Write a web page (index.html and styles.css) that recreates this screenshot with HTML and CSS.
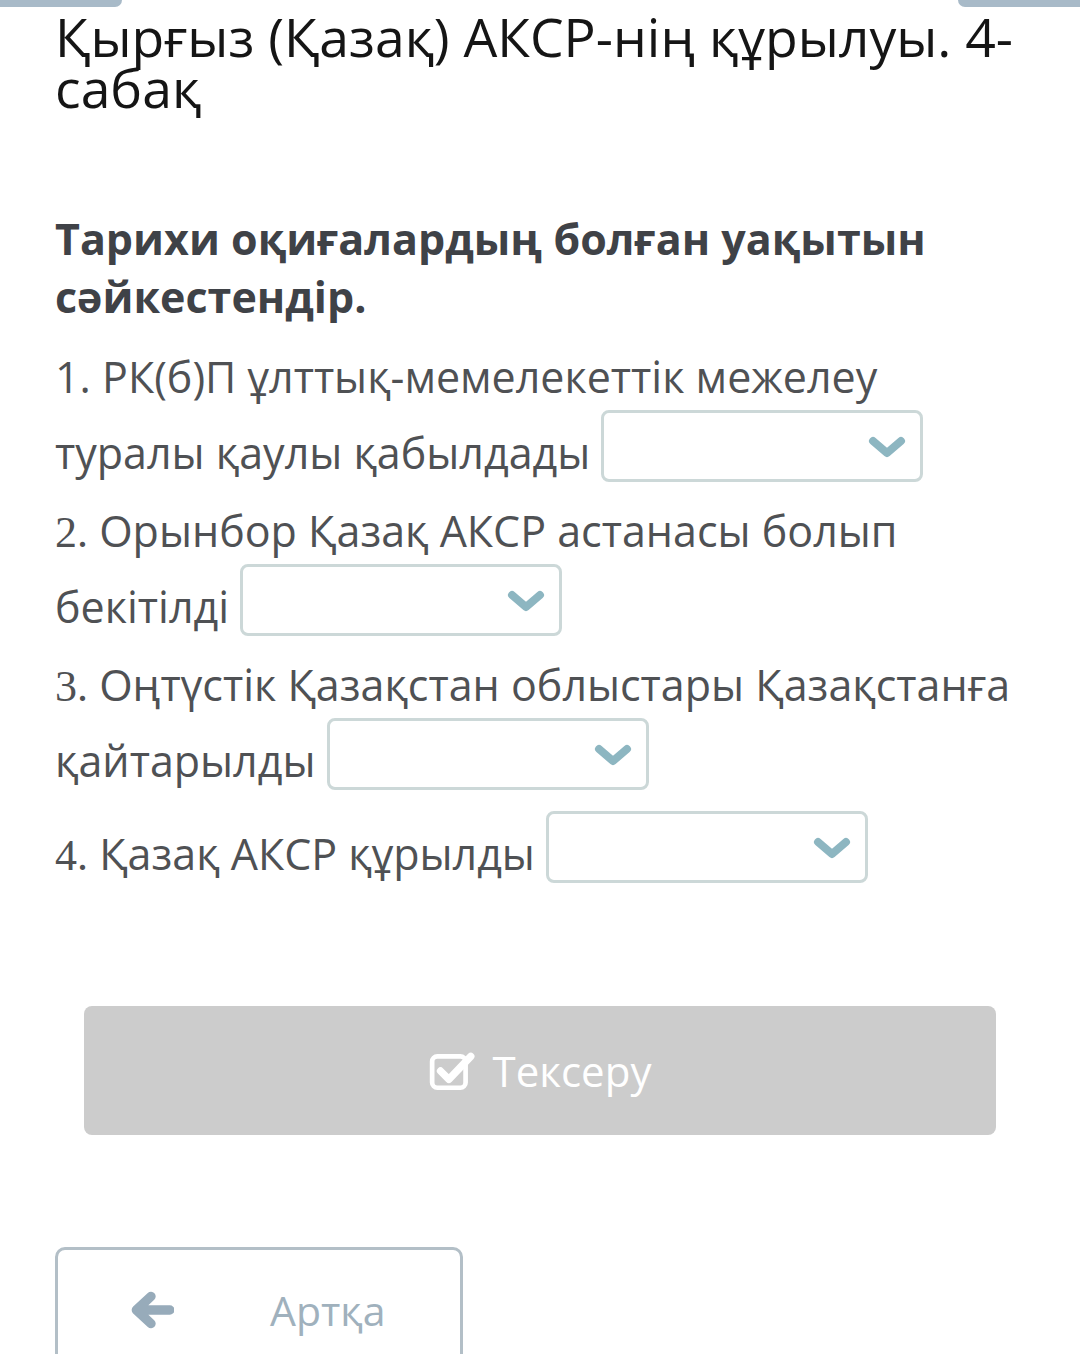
FILE: index.html
```html
<!DOCTYPE html>
<html lang="kk">
<head>
    <meta charset="UTF-8">
    <meta name="viewport" content="width=device-width, initial-scale=1.0">
    <title>Қырғыз (Қазақ) АКСР-нің құрылуы</title>
    <link rel="stylesheet" href="styles.css">
</head>
<body>
    <div class="top-tabs">
        <span class="tab tab-left"></span>
        <span class="tab tab-right"></span>
    </div>
    <div class="container">
        <h1 class="lesson-title">Қырғыз (Қазақ) АКСР-нің құрылуы. 4-сабақ</h1>

        <section class="task">
            <h2 class="task-title">Тарихи оқиғалардың болған уақытын сәйкестендір.</h2>

            <p class="item">1. РК(б)П ұлттық-мемелекеттік межелеу туралы қаулы қабылдады <span class="select"><svg class="chevron" viewBox="0 0 36 24"><path d="M4 6 L18 18 L32 6" /></svg></span></p>
            <p class="item"><span class="num">2.</span> Орынбор Қазақ АКСР астанасы болып бекітілді <span class="select"><svg class="chevron" viewBox="0 0 36 24"><path d="M4 6 L18 18 L32 6" /></svg></span></p>
            <p class="item"><span class="num">3.</span> Оңтүстік Қазақстан облыстары Қазақстанға қайтарылды <span class="select"><svg class="chevron" viewBox="0 0 36 24"><path d="M4 6 L18 18 L32 6" /></svg></span></p>
            <p class="item item-last"><span class="num">4.</span> Қазақ АКСР құрылды <span class="select"><svg class="chevron" viewBox="0 0 36 24"><path d="M4 6 L18 18 L32 6" /></svg></span></p>
        </section>

        <button class="check-btn" disabled>
            <svg class="check-icon" viewBox="0 0 44 40">
                <rect x="3" y="6" width="32" height="30" rx="5" />
                <path d="M11 20 L19 28 L40 6" />
            </svg>
            Тексеру
        </button>

        <div class="nav-row">
            <button class="back-btn">
                <svg class="back-icon" viewBox="0 0 44 36">
                    <path d="M40 18 H10 M22 5 L8 18 L22 31" />
                </svg>
                <span>Артқа</span>
            </button>
        </div>
    </div>
</body>
</html>
```

FILE: styles.css
```css
* {
    margin: 0;
    padding: 0;
    box-sizing: border-box;
    font-family: "Open Sans", "Noto Sans", sans-serif;
}
body {
    background: #fff;
    color: #4d4f52;
    overflow: hidden;
}
.top-tabs {
    display: flex;
    justify-content: space-between;
    height: 7px;
}
.tab {
    display: block;
    width: 122px;
    background: #a8bac8;
}
.tab-left {
    border-bottom-right-radius: 8px;
}
.tab-right {
    border-bottom-left-radius: 10px;
}
.container {
    padding: 0 55px;
}
.lesson-title {
    font-weight: 400;
    font-size: 53.5px;
    line-height: 51px;
    color: #151515;
    margin-top: 4px;
}
.task {
    margin-top: 97px;
}
.task-title {
    font-weight: 700;
    font-size: 43px;
    line-height: 58px;
    color: #3f4247;
    margin-bottom: 18px;
}
.item {
    font-size: 43px;
    line-height: 66px;
    color: #4f5154;
    margin-bottom: 12px;
}
.item-last {
    margin-top: 17px;
}
.num {
    font-family: "Liberation Serif", serif;
    font-size: 44px;
    line-height: 1;
}
.select {
    display: inline-block;
    vertical-align: -13px;
    width: 322px;
    height: 72px;
    border: 3px solid #ccd8d8;
    border-radius: 8px;
    position: relative;
}
.chevron {
    position: absolute;
    right: 14px;
    top: 22px;
    width: 38px;
    height: 24px;
    fill: none;
    stroke: #8db6c1;
    stroke-width: 8;
    stroke-linecap: round;
    stroke-linejoin: round;
}
.check-btn {
    display: flex;
    align-items: center;
    justify-content: center;
    gap: 18px;
    width: calc(100% - 58px);
    margin: 119px auto 0;
    height: 129px;
    background: #cccccc;
    border: none;
    border-radius: 8px;
    color: #fff;
    font-size: 42px;
}
.check-icon {
    width: 46px;
    height: 42px;
    fill: none;
    stroke: #fff;
    stroke-width: 4.5;
    stroke-linecap: round;
    stroke-linejoin: round;
}
.check-icon path {
    stroke-width: 7;
}
.nav-row {
    margin-top: 112px;
}
.back-btn {
    display: flex;
    align-items: center;
    width: 408px;
    height: 150px;
    background: #fff;
    border: 3px solid #b3bfc7;
    border-radius: 10px;
    padding: 0 0 24px 70px;
    color: #a0b1bd;
    font-size: 41px;
}
.back-icon {
    width: 46px;
    height: 38px;
    fill: none;
    stroke: #97abba;
    stroke-width: 9;
    stroke-linecap: round;
    stroke-linejoin: round;
    margin-right: 96px;
}
```
